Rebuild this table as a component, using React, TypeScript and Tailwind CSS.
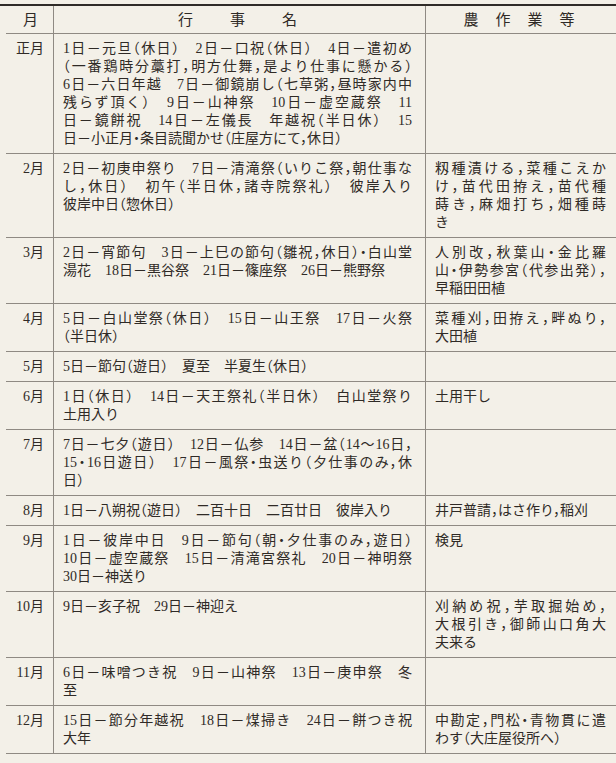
import React from "react";

type Row = { m: string; a: string[]; b: string[] };

const rows: Row[] = [
  {
    m: "正月",
    a: [
      "1日－元旦（休日）　2日－口祝（休日）　4日－遣初め",
      "（一番鶏時分藁打，明方仕舞，是より仕事に懸かる）",
      "6日－六日年越　7日－御鏡崩し（七草粥，昼時家内中",
      "残らず頂く）　9日－山神祭　10日－虚空蔵祭　11",
      "日－鏡餅祝　14日－左儀長　年越祝（半日休）　15",
      "日－小正月・条目読聞かせ（庄屋方にて，休日）",
    ],
    b: [],
  },
  {
    m: "2月",
    a: [
      "2日－初庚申祭り　7日－清滝祭（いりこ祭，朝仕事な",
      "し，休日）　初午（半日休，諸寺院祭礼）　彼岸入り",
      "彼岸中日（惣休日）",
    ],
    b: ["籾種漬ける，菜種こえか", "け，苗代田拵え，苗代種", "蒔き，麻畑打ち，畑種蒔", "き"],
  },
  {
    m: "3月",
    a: [
      "2日－宵節句　3日－上巳の節句（雛祝，休日）・白山堂",
      "湯花　18日－黒谷祭　21日－篠座祭　26日－熊野祭",
    ],
    b: ["人別改，秋葉山・金比羅", "山・伊勢参宮（代参出発），", "早稲田田植"],
  },
  {
    m: "4月",
    a: ["5日－白山堂祭（休日）　15日－山王祭　17日－火祭", "（半日休）"],
    b: ["菜種刈，田拵え，畔ぬり，", "大田植"],
  },
  {
    m: "5月",
    a: ["5日－節句（遊日）　夏至　半夏生（休日）"],
    b: [],
  },
  {
    m: "6月",
    a: ["1日（休日）　14日－天王祭礼（半日休）　白山堂祭り", "土用入り"],
    b: ["土用干し"],
  },
  {
    m: "7月",
    a: [
      "7日－七夕（遊日）　12日－仏参　14日－盆（14～16日，",
      "15・16日遊日）　17日－風祭・虫送り（夕仕事のみ，休",
      "日）",
    ],
    b: [],
  },
  {
    m: "8月",
    a: ["1日－八朔祝（遊日）　二百十日　二百廿日　彼岸入り"],
    b: ["井戸普請，はさ作り，稲刈"],
  },
  {
    m: "9月",
    a: [
      "1日－彼岸中日　9日－節句（朝・夕仕事のみ，遊日）",
      "10日－虚空蔵祭　15日－清滝宮祭礼　20日－神明祭",
      "30日－神送り",
    ],
    b: ["検見"],
  },
  {
    m: "10月",
    a: ["9日－亥子祝　29日－神迎え"],
    b: ["刈納め祝，芋取掘始め，", "大根引き，御師山口角大", "夫来る"],
  },
  {
    m: "11月",
    a: ["6日－味噌つき祝　9日－山神祭　13日－庚申祭　冬", "至"],
    b: [],
  },
  {
    m: "12月",
    a: ["15日－節分年越祝　18日－煤掃き　24日－餅つき祝", "大年"],
    b: ["中勘定，門松・青物貫に遣", "わす（大庄屋役所へ）"],
  },
];

function Lines({ lines }: { lines: string[] }) {
  return (
    <>
      {lines.map((l, i) =>
        i < lines.length - 1 ? (
          <div key={i} className="text-justify [text-align-last:justify]">
            {l}
          </div>
        ) : (
          <div key={i}>{l}</div>
        )
      )}
    </>
  );
}

export default function App() {
  return (
    <div className="w-[616px] h-[763px] overflow-hidden bg-[#f3f0e8] pt-[4px] text-[#2f2a26] text-[14px] leading-[18px] font-['Liberation_Serif','Noto_Sans_CJK_JP',serif] [font-feature-settings:'halt']">
      <div className="h-[2px] bg-[#2f2b28]" />
      <div className="ml-[6px]">
        <div className="flex h-[28px] border-b border-[#8f8a83] text-[15px]">
          <div className="w-[48px] shrink-0 border-r border-[#8f8a83] flex items-center justify-center pl-[2px]">
            月
          </div>
          <div className="w-[372px] shrink-0 border-r border-[#8f8a83] flex items-center justify-center gap-[37px] pr-[4px]">
            <span>行</span>
            <span>事</span>
            <span>名</span>
          </div>
          <div className="flex-1 flex items-center justify-center gap-[17px] pr-[4px]">
            <span>農</span>
            <span>作</span>
            <span>業</span>
            <span>等</span>
          </div>
        </div>
        {rows.map((r) => (
          <div key={r.m} className="flex border-b border-[#8f8a83]">
            <div className="w-[48px] shrink-0 border-r border-[#8f8a83] pt-[6px] pb-[5px] pr-[9px] text-right">
              {r.m}
            </div>
            <div className="w-[372px] shrink-0 border-r border-[#8f8a83] pt-[6px] pb-[5px] pl-[9px] pr-[13px]">
              <Lines lines={r.a} />
            </div>
            <div className="flex-1 pt-[6px] pb-[5px] pl-[9px] pr-[10px]">
              <Lines lines={r.b} />
            </div>
          </div>
        ))}
        <div className="h-[2px]" />
      </div>
    </div>
  );
}
